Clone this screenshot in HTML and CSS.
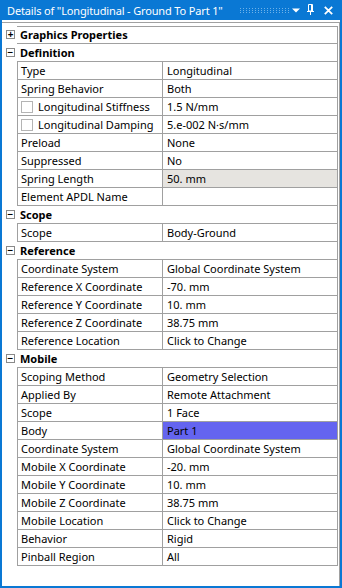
FILE: index.html
```html
<!DOCTYPE html>
<html>
<head>
<meta charset="utf-8">
<link rel="stylesheet" href="styles.css">
</head>
<body>
<div class="window">
  <div class="titlebar">
    <span class="title">Details of "Longitudinal - Ground To Part 1"</span>
    <svg class="grip" width="50" height="5" viewBox="0 0 50 5">
      <defs>
        <pattern id="dots" width="3" height="2" patternUnits="userSpaceOnUse">
          <rect x="0" y="0" width="1" height="1" fill="#6fb2e8"/>
        </pattern>
      </defs>
      <rect x="0" y="0" width="50" height="5" fill="url(#dots)"/>
    </svg>
    <svg class="ticon tri" width="8" height="5" viewBox="0 0 8 5"><path d="M0 0.5 H8 L4 4.5 Z" fill="#fff"/></svg>
    <svg class="ticon pin" width="8" height="11" viewBox="0 0 8 11"><path d="M1.5 0.5 H5.5 V7 H1.5 Z M0 7.5 H7 M3.5 7 V11" fill="none" stroke="#fff" stroke-width="1"/><path d="M4 1 H5 V7 H4 Z" fill="#fff"/></svg>
    <svg class="ticon close" width="9" height="9" viewBox="0 0 9 9"><path d="M0.8 0.8 L8.2 8.2 M8.2 0.8 L0.8 8.2" stroke="#fff" stroke-width="1.8"/></svg>
  </div>
  <div class="panel">
    <div class="grid">
      <div class="row head first"><span class="exp">+</span><div class="hcell">Graphics Properties</div></div>
      <div class="row head"><span class="exp">−</span><div class="hcell">Definition</div></div>
      <div class="row"><span></span><div class="lab">Type</div><div class="val">Longitudinal</div></div>
      <div class="row"><span></span><div class="lab">Spring Behavior</div><div class="val">Both</div></div>
      <div class="row"><span></span><div class="lab"><i class="chk"></i>Longitudinal Stiffness</div><div class="val">1.5 N/mm</div></div>
      <div class="row"><span></span><div class="lab"><i class="chk"></i>Longitudinal Damping</div><div class="val">5.e-002 N·s/mm</div></div>
      <div class="row"><span></span><div class="lab">Preload</div><div class="val">None</div></div>
      <div class="row"><span></span><div class="lab">Suppressed</div><div class="val">No</div></div>
      <div class="row"><span></span><div class="lab">Spring Length</div><div class="val ro">50. mm</div></div>
      <div class="row"><span></span><div class="lab">Element APDL Name</div><div class="val"></div></div>
      <div class="row head"><span class="exp">−</span><div class="hcell">Scope</div></div>
      <div class="row"><span></span><div class="lab">Scope</div><div class="val">Body-Ground</div></div>
      <div class="row head"><span class="exp">−</span><div class="hcell">Reference</div></div>
      <div class="row"><span></span><div class="lab">Coordinate System</div><div class="val">Global Coordinate System</div></div>
      <div class="row"><span></span><div class="lab">Reference X Coordinate</div><div class="val">-70. mm</div></div>
      <div class="row"><span></span><div class="lab">Reference Y Coordinate</div><div class="val">10. mm</div></div>
      <div class="row"><span></span><div class="lab">Reference Z Coordinate</div><div class="val">38.75 mm</div></div>
      <div class="row"><span></span><div class="lab">Reference Location</div><div class="val">Click to Change</div></div>
      <div class="row head"><span class="exp">−</span><div class="hcell">Mobile</div></div>
      <div class="row"><span></span><div class="lab">Scoping Method</div><div class="val">Geometry Selection</div></div>
      <div class="row"><span></span><div class="lab">Applied By</div><div class="val">Remote Attachment</div></div>
      <div class="row"><span></span><div class="lab">Scope</div><div class="val">1 Face</div></div>
      <div class="row"><span></span><div class="lab">Body</div><div class="val sel">Part 1</div></div>
      <div class="row"><span></span><div class="lab">Coordinate System</div><div class="val">Global Coordinate System</div></div>
      <div class="row"><span></span><div class="lab">Mobile X Coordinate</div><div class="val">-20. mm</div></div>
      <div class="row"><span></span><div class="lab">Mobile Y Coordinate</div><div class="val">10. mm</div></div>
      <div class="row"><span></span><div class="lab">Mobile Z Coordinate</div><div class="val">38.75 mm</div></div>
      <div class="row"><span></span><div class="lab">Mobile Location</div><div class="val">Click to Change</div></div>
      <div class="row"><span></span><div class="lab">Behavior</div><div class="val">Rigid</div></div>
      <div class="row"><span></span><div class="lab">Pinball Region</div><div class="val">All</div></div>
    </div>
  </div>
</div>
</body>
</html>
```
FILE: styles.css
```css
* { box-sizing: border-box; }
html, body { margin: 0; padding: 0; background: #fff; }
.window {
  width: 342px;
  height: 588px;
  border: 2px solid #0a78d4;
  border-top: 0;
  background: #fff;
  font-family: "Noto Sans", sans-serif;
  font-size: 11px;
  color: #000;
  display: flex;
  flex-direction: column;
}
.titlebar {
  height: 20px;
  margin: 0 -2px;
  background: #0a78d4;
  color: #fff;
  display: flex;
  align-items: center;
  padding: 0 10px 0 7px;
  font-size: 11px;
  letter-spacing: -0.15px;
}
.title { white-space: nowrap; overflow: hidden; flex: none; width: 231px; }
.grip { margin-left: 2px; flex: none; }
.ticon { flex: none; }
.tri { margin-left: 2px; }
.pin { margin-left: 7px; margin-top: -1px; }
.close { margin-left: 9px; }
.panel {
  flex: 1;
  margin-top: 2px;
  border-top: 1px solid #a0a0a0;
  border-right: 1px solid #a0a0a0;
  padding-top: 3px;
}
.row {
  display: grid;
  grid-template-columns: 15px 145px 176px;
  height: 18px;
  line-height: 17px;
}
.row > span { display: block; }
.lab, .val, .hcell {
  border-bottom: 1px solid #a0a0a0;
  padding-left: 3px;
  white-space: nowrap;
  overflow: hidden;
}
.lab { border-left: 1px solid #a0a0a0; display: flex; align-items: center; }
.val { border-left: 1px solid #a0a0a0; border-right: 1px solid #a0a0a0; padding-left: 4px; }
.hcell {
  grid-column: 2 / 4;
  border-right: 1px solid #a0a0a0;
  font-weight: bold;
}
.first .hcell { border-top: 1px solid #a0a0a0; line-height: 16px; }
.exp {
  width: 9px;
  height: 9px;
  margin: 4px 0 0 4px;
  border: 1px solid #8a8a8a;
  font-size: 10px;
  line-height: 7px;
  text-align: center;
  color: #000;
  font-weight: bold;
}
.chk {
  display: inline-block;
  width: 12px;
  height: 12px;
  border: 1px solid #b4b4b4;
  margin-right: 5px;
  flex: none;
}
.ro { background: #e6e4e0; }
.sel { background: #6464f0; }
```
